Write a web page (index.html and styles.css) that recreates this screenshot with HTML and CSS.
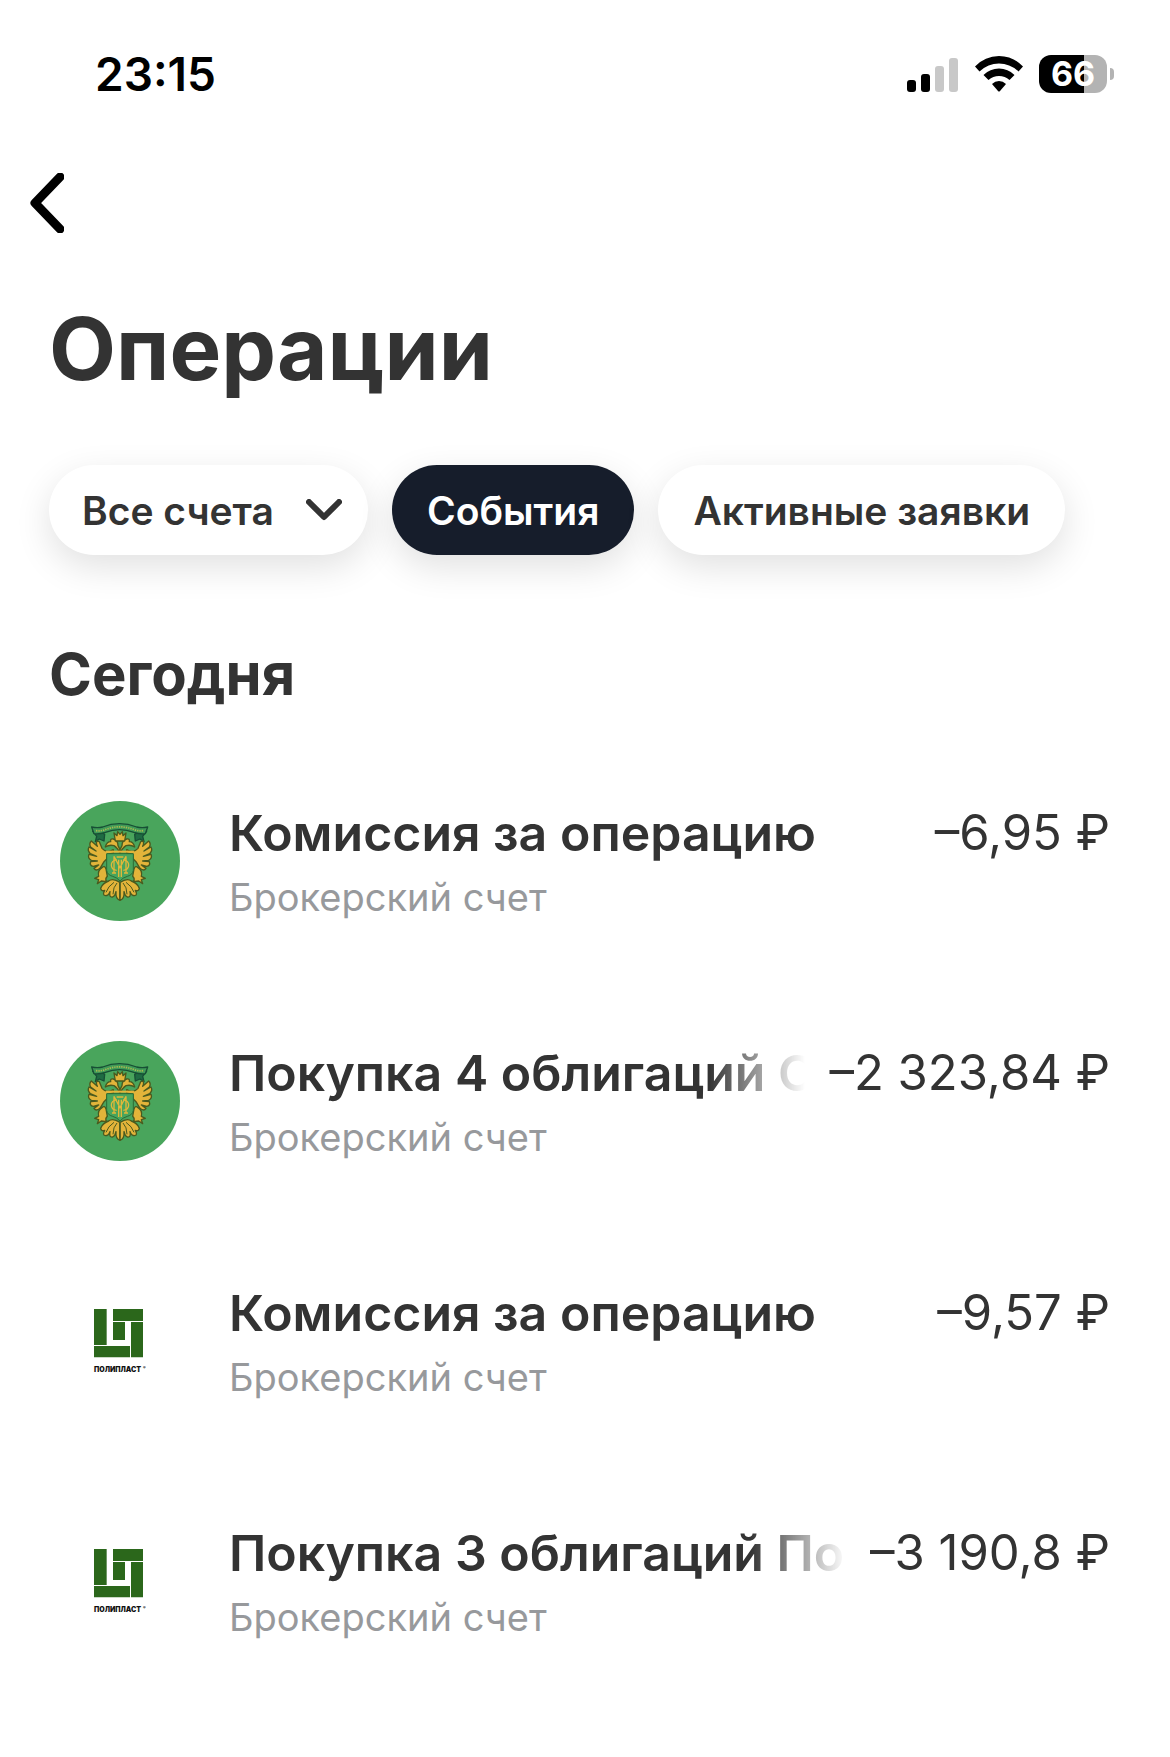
FILE: index.html
```html
<!DOCTYPE html>
<html lang="ru">
<head>
    <meta charset="UTF-8">
    <meta name="viewport" content="width=device-width, initial-scale=1.0">
    <title>Операции</title>
    <link rel="stylesheet" href="styles.css">
</head>
<body>
    <!-- shared logos -->
    <svg class="sprite" aria-hidden="true">
        <symbol id="logo-emblem" viewBox="0 0 360 360">
            <circle cx="180" cy="180" r="180" fill="#49a55c"/>
            <!-- ribbon -->
            <g stroke="#174f35" stroke-width="4" stroke-linejoin="round">
                <path d="M98 90 L122 92 L134 100 L132 120 L118 114 L106 122 L110 106 Z" fill="#1f6b42"/>
                <path d="M260 90 L236 92 L224 100 L226 120 L240 114 L252 122 L248 106 Z" fill="#1f6b42"/>
                <path d="M95 78 Q112 82 128 78 Q178 58 230 78 Q246 82 263 78 L256 98 Q240 100 222 94 Q178 78 136 94 Q118 100 102 98 Z" fill="#3f9a57"/>
            </g>
            <path d="M108 89 Q124 91 138 85 Q178 70 220 85 Q234 91 250 89" fill="none" stroke="#a9b850" stroke-width="5" stroke-dasharray="4 3"/>
            <g fill="#e3b43a" stroke="#4a5a1e" stroke-width="4" stroke-linejoin="round">
                <!-- wings -->
                <path id="wing" d="M160 146 Q140 158 126 142 L118 122 L110 120 Q108 128 112 136 L94 120 Q86 128 92 138 L108 150 L87 138 Q81 148 91 158 L110 166 L87 160 Q82 172 94 178 L112 180 L92 182 Q88 194 100 196 L116 192 L102 202 Q108 212 120 202 L132 182 L140 174 L142 160 L160 156 Z"/>
                <use href="#wing" transform="matrix(-1 0 0 1 360 0)"/>
                <!-- heads -->
                <path id="head" d="M180 156 Q172 140 162 134 Q148 130 136 138 Q140 122 152 122 Q150 112 160 114 Q174 118 174 134 L180 146 Z"/>
                <use href="#head" transform="matrix(-1 0 0 1 360 0)"/>
                <!-- crown -->
                <path d="M166 120 L162 96 L171 104 L173 92 L180 100 L187 92 L189 104 L198 96 L194 120 Z"/>
                <!-- claws -->
                <path id="claw" d="M126 200 Q134 192 138 204 L142 226 Q134 234 140 242 L124 240 L112 248 L116 236 L104 232 L116 226 Q112 208 126 200 Z"/>
                <use href="#claw" transform="matrix(-1 0 0 1 360 0)"/>
                <!-- tail -->
                <path id="tail" d="M180 244 Q158 230 146 240 Q128 246 122 262 Q124 272 134 268 Q126 282 136 284 Q146 284 150 272 Q146 290 158 288 Q166 284 168 272 Q166 294 180 298 Z"/>
                <use href="#tail" transform="matrix(-1 0 0 1 360 0)"/>
            </g>
            <path d="M180 246 V290 M171 246 Q159 258 159 280 M189 246 Q201 258 201 280 M162 244 Q144 256 138 274 M198 244 Q216 256 222 274" fill="none" stroke="#4a5a1e" stroke-width="3"/>
            <!-- shield with monogram -->
            <path d="M140 158 H220 V208 Q218 222 202 226 Q188 230 180 240 Q172 230 158 226 Q142 222 140 208 Z" fill="#49a55c" stroke="#2c6a34" stroke-width="3"/>
            <path d="M138 152 H222" stroke="#e3b43a" stroke-width="6"/>
            <g fill="none" stroke="#e0b83a" stroke-width="4">
                <path d="M162 166 V216 M198 166 V216 M156 216 H168 M192 216 H204 M162 166 L180 200 L198 166 M176 176 V228 M184 176 V228 M170 168 H190"/>
                <path d="M170 176 Q154 180 154 192 Q154 206 170 208 M190 176 Q206 180 206 192 Q206 206 190 208"/>
            </g>
        </symbol>
        <symbol id="logo-polyplast" viewBox="0 0 147 147">
            <path d="M0 0 H38 V108 H0 Z M0 111 H108 V145 H0 Z M111 39 H147 V145 H111 Z M57 0 H147 V36 H57 Z M57 39 H93 V93 H57 Z" fill="#2b671b"/>
        </symbol>
    </svg>

    <div class="status-bar">
        <time class="clock">23:15</time>
        <div class="status-icons">
            <svg width="52" height="36" viewBox="0 0 52 36" aria-hidden="true">
                <rect x="0" y="24" width="9" height="12" rx="3"/>
                <rect x="14" y="18" width="9" height="18" rx="3"/>
                <rect x="28" y="10" width="9" height="26" rx="3" fill="#c8c8c8"/>
                <rect x="42" y="2" width="9" height="34" rx="3" fill="#c8c8c8"/>
            </svg>
            <svg width="48" height="36" viewBox="0 0 48 36" aria-hidden="true">
                <path d="M0 10.500 Q10 0 24 0 Q38 0 48 10.500 L43.500 15.500 Q35 7.500 24 7.500 Q13 7.500 4.500 15.500 Z"/>
                <path d="M8.500 19 Q15 12.500 24 12.500 Q33 12.500 39.500 19 L34.500 24 Q30 20 24 20 Q18 20 13.500 24 Z"/>
                <path d="M17 28 Q20 25 24 25 Q28 25 31 28 L25 35 Q24 36 23 35 Z"/>
            </svg>
            <div class="battery"><span class="battery-level">66</span></div>
        </div>
    </div>

    <nav class="nav">
        <button class="back" type="button" aria-label="Назад">
            <svg width="34" height="60" viewBox="0 0 34 60" aria-hidden="true">
                <path d="M30 4 L5 30 L30 56" fill="none" stroke="#000" stroke-width="9" stroke-linecap="round" stroke-linejoin="round"/>
            </svg>
        </button>
    </nav>

    <main class="content">
        <h1>Операции</h1>

        <div class="filters">
            <label class="chip">
                <select class="account" aria-label="Счет">
                    <option>Все счета</option>
                </select>
                <svg width="36" height="22" viewBox="0 0 36 22" aria-hidden="true">
                    <path d="M3 3 L18 18 L33 3" fill="none" stroke="#333" stroke-width="6" stroke-linecap="round" stroke-linejoin="round"/>
                </svg>
            </label>
            <button class="chip active" type="button">События</button>
            <button class="chip" type="button">Активные заявки</button>
        </div>

        <h2>Сегодня</h2>

        <ul class="operations">
            <li class="operation">
                <svg class="logo" aria-hidden="true"><use href="#logo-emblem"/></svg>
                <div class="info">
                    <div class="line">
                        <span class="name">Комиссия за операцию</span>
                        <span class="amount">–6,95 ₽</span>
                    </div>
                    <div class="account-name">Брокерский счет</div>
                </div>
            </li>
            <li class="operation">
                <svg class="logo" aria-hidden="true"><use href="#logo-emblem"/></svg>
                <div class="info">
                    <div class="line">
                        <span class="name">Покупка 4 облигаций С</span>
                        <span class="amount">–2 323,84 ₽</span>
                    </div>
                    <div class="account-name">Брокерский счет</div>
                </div>
            </li>
            <li class="operation">
                <div class="logo polyplast">
                    <svg width="49" height="49" aria-hidden="true"><use href="#logo-polyplast"/></svg>
                    <div class="logo-name">ПОЛИПЛАСТ<sup>®</sup></div>
                </div>
                <div class="info">
                    <div class="line">
                        <span class="name">Комиссия за операцию</span>
                        <span class="amount">–9,57 ₽</span>
                    </div>
                    <div class="account-name">Брокерский счет</div>
                </div>
            </li>
            <li class="operation">
                <div class="logo polyplast">
                    <svg width="49" height="49" aria-hidden="true"><use href="#logo-polyplast"/></svg>
                    <div class="logo-name">ПОЛИПЛАСТ<sup>®</sup></div>
                </div>
                <div class="info">
                    <div class="line">
                        <span class="name">Покупка 3 облигаций По</span>
                        <span class="amount">–3 190,8 ₽</span>
                    </div>
                    <div class="account-name">Брокерский счет</div>
                </div>
            </li>
        </ul>
    </main>
</body>
</html>
```
FILE: styles.css
```css
* {
    box-sizing: border-box;
}
body {
    margin: 0;
    background: #fff;
    color: #333;
    font-family: Inter, "Liberation Sans", sans-serif;
}
button,
select {
    font: inherit;
    color: inherit;
    border: 0;
    padding: 0;
    background: none;
    cursor: pointer;
}
.sprite {
    position: absolute;
    width: 0;
    height: 0;
}
.status-bar {
    display: flex;
    justify-content: space-between;
    align-items: center;
    height: 148px;
    padding: 0 56px 0 95px;
    color: #000;
}
.clock {
    font-size: 46px;
    font-weight: 600;
}
.status-icons {
    display: flex;
    align-items: center;
    gap: 16px;
}
.battery {
    display: flex;
    align-items: center;
    gap: 3px;
}
.battery-level {
    width: 68px;
    height: 38px;
    border-radius: 12px;
    background: linear-gradient(to right, #000 66%, #b3b3b3 66%);
    color: #fff;
    font-size: 34px;
    font-weight: 700;
    line-height: 38px;
    text-align: center;
}
.battery::after {
    content: "";
    width: 4px;
    height: 12px;
    border-radius: 0 4px 4px 0;
    background: #b3b3b3;
}
.nav {
    display: flex;
    align-items: center;
    height: 110px;
    padding: 0 30px;
}
.back {
    display: flex;
}
.content {
    padding: 39px 49px;
}
h1 {
    margin: 0 0 64px;
    font-size: 87px;
    font-weight: 700;
    line-height: 104px;
}
.filters {
    display: flex;
    gap: 24px;
    margin-bottom: 83px;
}
.chip {
    display: flex;
    align-items: center;
    gap: 32px;
    height: 90px;
    padding: 0 35px;
    border-radius: 45px;
    background: #fff;
    box-shadow: 0 12px 36px rgba(0, 0, 0, 0.12);
    font-size: 39px;
    font-weight: 600;
    white-space: nowrap;
}
.chip.active {
    background: #161d2b;
    color: #fff;
}
.chip:first-child {
    padding: 0 26px 0 33px;
}
.account {
    appearance: none;
}
h2 {
    margin: 0 0 91px;
    font-size: 58px;
    font-weight: 700;
    line-height: 72px;
}
.operations {
    display: flex;
    flex-direction: column;
    gap: 112px;
    margin: 0;
    padding: 0 11px;
    list-style: none;
}
.operation {
    display: flex;
    gap: 49px;
}
.logo {
    flex: none;
    width: 120px;
    height: 120px;
}
.polyplast {
    padding: 28px 0 0 34px;
}
.polyplast svg {
    display: block;
}
.logo-name {
    margin-top: 6px;
    color: #111;
    font-size: 7px;
    font-weight: 900;
    line-height: 12px;
    white-space: nowrap;
}
.logo-name sup {
    margin-left: 2px;
    font-size: 4px;
    line-height: 0;
}
.info {
    flex: 1;
    min-width: 0;
    line-height: 64px;
}
.line {
    display: flex;
    gap: 24px;
    font-size: 50px;
    white-space: nowrap;
}
.name {
    flex: 1;
    min-width: 0;
    overflow: hidden;
    font-weight: 600;
    -webkit-mask-image: linear-gradient(to left, transparent, #000 96px);
    mask-image: linear-gradient(to left, transparent, #000 96px);
}
.amount {
    font-size: 49px;
}
.account-name {
    color: #97999c;
    font-size: 38px;
}
```
